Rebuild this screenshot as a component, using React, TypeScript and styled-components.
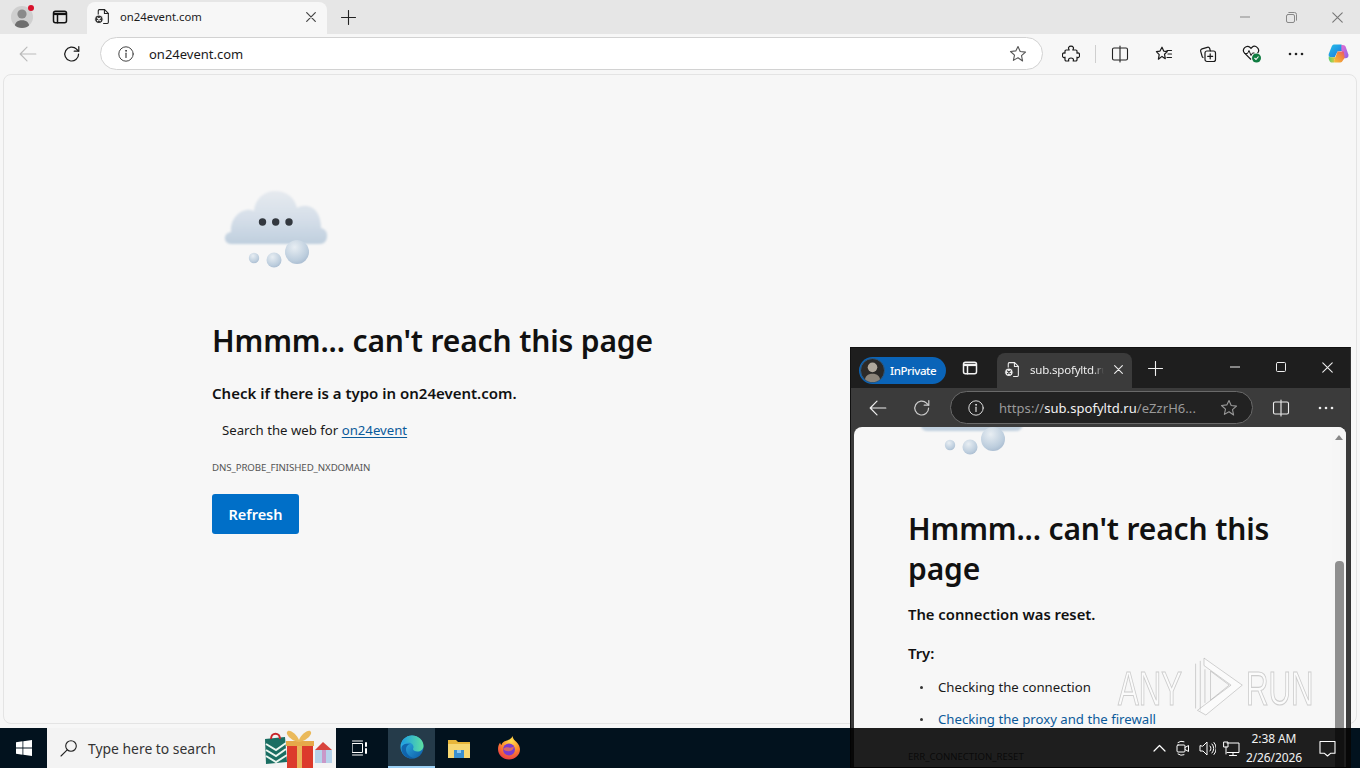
import React from "react";
import styled, { createGlobalStyle } from "styled-components";

const Global = createGlobalStyle`
  html, body { margin: 0; padding: 0; }
  body { font-family: "Noto Sans", "Open Sans", sans-serif; }
  * { box-sizing: border-box; }
`;

const Screen = styled.div`
  position: relative; width: 1360px; height: 768px; overflow: hidden;
  background: #1090f0; display: flex; flex-direction: column;
`;
const Browser = styled.div`
  height: 728px; background: #f7f7f7; display: flex; flex-direction: column; flex: none;
`;
const TabStrip = styled.div`
  height: 34px; background: #e6e6e6; display: flex; align-items: flex-end; flex: none; position: relative;
`;
const Profile = styled.div`
  position: relative; width: 22px; height: 22px; border-radius: 50%; background: #cfcfcf;
  margin: 0 0 6px 11px; flex: none; overflow: hidden;
`;
const ProfileWrap = styled.div` position: relative; flex: none; display: flex; `;
const RedDot = styled.span`
  position: absolute; left: 28px; top: -1px; width: 6px; height: 6px; border-radius: 50%; background: #d8112b;
`;
const TabIconSlot = styled.div<{ $w: number; $m?: number }>`
  width: ${p => p.$w}px; height: 28px; margin-left: ${p => p.$m ?? 0}px; flex: none;
  display: flex; align-items: center; justify-content: center; align-self: center;
`;
const ActiveTab = styled.div`
  width: 240px; height: 32px; margin-left: 13px; background: #f7f7f7; border-radius: 8px 8px 0 0;
  display: flex; align-items: center; padding: 0 11px 3px 7px; flex: none;
`;
const TabTitle = styled.span`
  font-size: 11.3px; color: #1c1c1c; margin-left: 9px; flex: 1; white-space: nowrap; overflow: hidden;
`;
const WindowControls = styled.div`
  margin-left: auto; display: flex; align-self: stretch; align-items: center;
`;
const WinBtn = styled.div`
  width: 46px; height: 34px; display: flex; align-items: center; justify-content: center;
`;
const Toolbar = styled.div`
  height: 39px; display: flex; align-items: center; flex: none; padding-left: 6px;
`;
const NavBtn = styled.div<{ $w?: number }>`
  width: ${p => p.$w ?? 44}px; height: 32px; display: flex; align-items: center; justify-content: center; flex: none;
`;
const AddressBar = styled.div`
  width: 943px; height: 33px; margin-left: 6px; background: #fff; border: 1px solid #d2d2d2; border-radius: 17px;
  display: flex; align-items: center; padding: 0 15px 0 17px; flex: none;
`;
const AddressText = styled.span`
  font-size: 13px; color: #1a1a1a; margin-left: 15px; flex: 1;
`;
const ToolIcons = styled.div`
  display: flex; align-items: center; margin-left: 6px;
`;
const ToolDivider = styled.div`
  width: 1px; height: 18px; background: #cfcfcf; margin: 0 2px 0 2px; flex: none;
`;
const Viewport = styled.div`
  flex: 1; margin: 1px 3px 4px 3px; border: 1px solid #e4e4e4; border-radius: 8px; background: #f7f7f7;
  padding: 106px 0 0 208px; overflow: hidden;
`;
const CloudBox = styled.div`
  width: 120px; height: 90px; margin-left: 6px;
`;
const Heading = styled.h1`
  margin: 50px 0 0; font-size: 30px; line-height: 40px; font-weight: 600; color: #111; letter-spacing: -.15px; white-space: nowrap;
`;
const SubHead = styled.p`
  margin: 21px 0 0; font-size: 15px; line-height: 22px; font-weight: 600; color: #111;
`;
const SearchLine = styled.p`
  margin: 16px 0 0 10px; font-size: 13.2px; line-height: 20px; color: #1a1a1a;
`;
const BlueLink = styled.a<{ $plain?: boolean }>`
  color: #0b5a9a; text-decoration: ${p => p.$plain ? "none" : "underline"}; text-underline-offset: 2px;
`;
const ErrorCode = styled.p`
  margin: 21px 0 0; font-size: 9.7px; line-height: 14px; color: #555; letter-spacing: -.1px;
`;
const RefreshBtn = styled.div`
  margin-top: 19px; width: 87px; height: 40px; border-radius: 3px; background: #006fc8; color: #fff;
  font-size: 14.5px; font-weight: 600; display: flex; align-items: center; justify-content: center;
`;

const Popup = styled.div`
  position: absolute; left: 850px; top: 347px; width: 501px; height: 421px; background: #1e1e1e;
  display: flex; flex-direction: column; border: 1px solid #111; border-right-color: #333; z-index: 2;
`;
const PopupStrip = styled.div`
  height: 40px; display: flex; align-items: flex-end; flex: none; background: #1e1e1e;
`;
const InPrivate = styled.div`
  width: 87px; height: 27px; margin: 0 0 4px 8px; border-radius: 14px; background: #0a64b8; color: #fff; flex: none;
  display: flex; align-items: center; font-size: 11.5px; font-weight: 500; gap: 5px; letter-spacing: -.4px;
`;
const Avatar = styled.div`
  width: 25px; height: 25px; border-radius: 50%; margin-left: 1px; overflow: hidden; flex: none;
  background: #2c2a28; border: 1px solid #2b5a84;
`;
const PopupTab = styled.div`
  width: 135px; height: 35px; margin-left: 13px; background: #3b3b3b; border-radius: 8px 8px 0 0; flex: none;
  display: flex; align-items: center; padding: 0 6px 2px 7px;
`;
const PopupTabTitle = styled.span`
  font-size: 11.5px; color: #eee; margin-left: 9px; width: 74px; overflow: hidden; white-space: nowrap;
  letter-spacing: -.2px; margin-right: 10px; flex: none;
  mask-image: linear-gradient(90deg, #000 85%, transparent);
`;
const PopupWinBtn = styled.div`
  width: 46px; height: 32px; display: flex; align-items: center; justify-content: center; flex: none;
`;
const PopupControls = styled.div`
  margin-left: auto; display: flex; align-self: flex-start; margin-top: 3px;
`;
const PopupToolbar = styled.div`
  height: 39px; background: #3b3b3b; display: flex; align-items: center; padding-left: 5px; flex: none;
`;
const PopupAddress = styled.div`
  width: 303px; height: 33px; margin-left: 6px; background: #222; border: 1px solid #6a6a6a; border-radius: 17px;
  display: flex; align-items: center; padding: 0 14px 0 17px; flex: none;
`;
const UrlText = styled.span`
  font-size: 13px; color: #9a9a9a; margin-left: 15px; flex: 1; white-space: nowrap; overflow: hidden; letter-spacing: .05px;
  b { color: #f2f2f2; font-weight: 400; }
`;
const PopupBody = styled.div`
  flex: 1; background: #3b3b3b; padding: 0 4px 0 3px; min-height: 0;
`;
const PopupPanel = styled.div`
  height: 100%; background: #f7f7f7; border-radius: 8px 8px 0 0; overflow: hidden; display: flex;
`;
const PopupContent = styled.div`
  flex: 1; padding-left: 54px; min-width: 0;
`;
const PopupCloud = styled.div`
  width: 120px; height: 90px; margin: -59px 0 0 6px;
`;
const PopupHeading = styled.h1`
  margin: 51px 0 0; width: 380px; font-size: 30px; line-height: 40px; font-weight: 600; color: #111; letter-spacing: -.15px;
`;
const PopupSub = styled.p`
  margin: 14px 0 0; font-size: 14.8px; line-height: 22px; font-weight: 600; color: #111;
`;
const TryLine = styled(PopupSub)` margin-top: 17px; `;
const TryList = styled.ul`
  margin: 13px 0 0; padding: 0 0 0 30px; font-size: 13.2px; color: #1a1a1a; list-style: none;
  li { line-height: 20px; margin-bottom: 12px; display: flex; }
  li::before { content: ""; flex: none; width: 3px; height: 3px; border-radius: 50%; background: #333; margin: 9px 15px 0 -18px; }
`;
const PopupCode = styled.p`
  margin: 21px 0 0; font-size: 9.6px; line-height: 14px; color: #555;
`;
const Scrollbar = styled.div`
  width: 14px; background: #f6f6f6; position: relative; flex: none; display: flex; flex-direction: column; align-items: center;
`;
const ScrollArrow = styled.div`
  width: 0; height: 0; margin-top: 8px; border-left: 4px solid transparent; border-right: 4px solid transparent; border-bottom: 5px solid #888;
`;
const ScrollThumb = styled.div`
  width: 9px; margin-top: 121px; flex: 1; background: #8f8f8f; border-radius: 4px 4px 0 0;
`;

const Taskbar = styled.div`
  position: relative; z-index: 3; height: 40px; flex: none; background: rgba(0,0,0,.88);
  display: flex; align-items: stretch;
`;
const StartBtn = styled.div`
  width: 47px; display: flex; align-items: center; justify-content: center; flex: none;
`;
const SearchBox = styled.div`
  width: 289px; background: #f3f3f3; display: flex; align-items: center; padding-left: 13px; position: relative; flex: none;
`;
const SearchText = styled.span`
  font-size: 13.9px; color: #333; margin-left: 10px;
`;
const Gifts = styled.div`
  position: absolute; right: 3px; top: 2px; width: 70px; height: 38px;
`;
const TaskApp = styled.div<{ $active?: boolean; $w?: number; $pr?: number }>`
  width: ${p => p.$w ?? 48}px; flex: none; display: flex; align-items: center; justify-content: center;
  padding-right: ${p => p.$pr ?? 0}px;
  ${p => p.$active ? "background:#253b4a; border-bottom:2px solid #9bd0f5;" : ""}
`;
const Tray = styled.div`
  margin-left: auto; display: flex; align-items: center; padding-right: 8px;
`;
const TrayIcon = styled.div`
  width: 24px; display: flex; align-items: center; justify-content: center; flex: none;
`;
const Clock = styled.div`
  width: 58px; margin-left: 2px; text-align: center; color: #f2f2f2; font-size: 12px; line-height: 19px; white-space: nowrap; letter-spacing: -.1px;
`;
const NotifyBtn = styled.div`
  width: 48px; margin-left: 1px; display: flex; align-items: center; justify-content: center; padding-right: 2px;
`;

const Watermark = styled.div`
  position: absolute; left: 1118px; top: 654px; z-index: 4; width: 200px; height: 66px; display: flex; align-items: center;
  pointer-events: none;
`;
const WatermarkWord = styled.span`
  font-family: "Liberation Sans", sans-serif; font-size: 48px; line-height: 1; color: rgba(255,255,255,.55);
  -webkit-text-stroke: 1.2px rgba(150,150,150,.45); transform: scaleX(.65); transform-origin: left center; width: 72px; display: block; margin-top: 4px;
`;

const Ic = ({ c = "#1a1a1a", s = 20, w = 1.2, vb = 20, children }: any) => (
  <svg width={s} height={s} viewBox={`0 0 ${vb} ${vb}`} fill="none" stroke={c} strokeWidth={w} strokeLinecap="round" strokeLinejoin="round">{children}</svg>
);
const TabsIcon = ({ c = "#111" }: any) => (
  <Ic c={c} s={16} vb={16} w={1.5}><rect x="1.5" y="2.2" width="13" height="11.6" rx="2" /><path d="M2 4.900h12" strokeWidth="2.400" strokeLinecap="butt" /><path d="M5.500 5.200v8.600" /></Ic>
);
const PageErr = ({ c = "#222", bg = "#f7f7f7", dot = "#333", dotx = "#fff" }: any) => (
  <Ic c={c} s={17} vb={16} w={1}>
    <path d="M4 6V2.5A1 1 0 0 1 5 1.5h5l3.5 3.5v8.5a1 1 0 0 1-1 1H9" />
    <path d="M9.8 1.5v3.7h3.7" />
    <circle cx="4.6" cy="10.6" r="4" fill={dot} stroke={bg} />
    <path d="M3.2 9.2l2.8 2.8M6 9.2l-2.8 2.8" stroke={dotx} strokeWidth="1" />
  </Ic>
);
const CloseX = ({ c = "#444", s = 10, w = 1.2 }: any) => (
  <Ic c={c} s={s} vb={10} w={w}><path d="M.7.7l8.6 8.6M9.3.7L.7 9.3" /></Ic>
);
const PlusI = ({ c = "#222" }: any) => (
  <Ic c={c} s={15} vb={15} w={1.1}><path d="M7.5.5v14M.5 7.5h14" /></Ic>
);
const InfoI = ({ c = "#444" }: any) => (
  <Ic c={c} s={16} vb={16} w={1}><circle cx="8" cy="8" r="7.2" /><path d="M8 7.2v4.2" strokeWidth="1.2" /><circle cx="8" cy="4.8" r=".5" fill={c} /></Ic>
);
const StarI = ({ c = "#555", s = 18 }: any) => (
  <Ic c={c} s={s} vb={18} w={1.1}><path d="M9 1.6l2.2 4.9 5.3.6-4 3.6 1.1 5.3L9 12.7l-4.6 2.7 1.1-5.3-4-3.6 5.3-.6z" /></Ic>
);
const RefreshI = ({ c = "#1a1a1a" }: any) => (
  <Ic c={c} s={18} vb={18} w={1.2}><path d="M15.6 9a6.9 6.9 0 1 1-2-4.8l2 1.9" /><path d="M15.8 1.6v4.6h-4.6" /></Ic>
);
const BackI = ({ c = "#bbb" }: any) => (
  <Ic c={c} s={18} vb={18} w={1.2}><path d="M1.2 9h15.6M8 2.2L1.2 9 8 15.8" /></Ic>
);
const SplitI = ({ c = "#222" }: any) => (
  <Ic c={c} s={18} vb={18} w={1.1}><path d="M8 3H3a1.5 1.5 0 0 0-1.5 1.5v9A1.5 1.5 0 0 0 3 15h5M10 3h5a1.5 1.5 0 0 1 1.5 1.5v9A1.5 1.5 0 0 1 15 15h-5M9 1v16" /></Ic>
);
const DotsI = ({ c = "#222" }: any) => (
  <svg width="16" height="4" viewBox="0 0 16 4"><circle cx="2" cy="2" r="1.3" fill={c} /><circle cx="8" cy="2" r="1.3" fill={c} /><circle cx="14" cy="2" r="1.3" fill={c} /></svg>
);
const PuzzleI = () => (
  <Ic s={18} vb={18} w={1.2}><path d="M7.200 5C5.600 2.600 7 1.200 9 1.200C11 1.200 12.400 2.600 10.800 5H13.800A1.200 1.200 0 0 1 15 6.200V8.200C16.800 7 17.600 8.800 17.600 10.200C17.600 11.600 16.800 13.400 15 12.200V14.800A1.200 1.200 0 0 1 13.800 16H11.200C12 13.800 10.500 13 9 13C7.500 13 6 13.800 6.800 16H4.200A1.200 1.200 0 0 1 3 14.800V12.200C1.200 13.400 .4 11.600 .4 10.200C.4 8.800 1.200 7 3 8.200V6.200A1.200 1.200 0 0 1 4.200 5Z" /></Ic>
);
const FavI = () => (
  <Ic s={18} vb={18} w={1.2}><path d="M7 2.2l1.7 3.9 3.6.5-2.8 2.6.8 4.5L7 11.4l-3.6 2.8.8-4.5L1.4 6.6 5 6.1zM12 5.5h4.5M13 9h3.5M12 12.5h4.5" /></Ic>
);
const CollI = () => (
  <Ic s={18} vb={18} w={1.2}><rect x="6" y="6" width="10.5" height="10.5" rx="2" /><path d="M11.2 8.8v5M8.7 11.3h5M4 12.5A2 2 0 0 1 3 11L1.7 6.3a2 2 0 0 1 1.4-2.5l5.2-1.5A2 2 0 0 1 10.7 3.5l.6 2.3" /></Ic>
);
const HeartI = () => (
  <svg width="20" height="20" viewBox="0 0 20 20" fill="none">
    <path d="M9 15.5L2.6 9.2A4 4 0 0 1 8.2 3.5l.8.8.8-.8a4 4 0 0 1 5.7 5.6" stroke="#1a1a1a" strokeWidth="1.2" />
    <path d="M2.5 9.5h3l1.5-3 2 5 1.5-2.5h2" stroke="#1a1a1a" strokeWidth="1" />
    <circle cx="14.5" cy="14" r="4.5" fill="#107c41" />
    <path d="M12.5 14l1.5 1.5 2.5-3" stroke="#fff" strokeWidth="1.1" />
  </svg>
);
const CopilotI = () => (
  <svg width="23" height="23" viewBox="0 0 24 24">
    <defs>
      <linearGradient id="cpa" x1="0" y1="0" x2="1" y2="1"><stop offset="0" stopColor="#27c2e8" /><stop offset="1" stopColor="#1a6fe0" /></linearGradient>
      <linearGradient id="cpb" x1="0" y1="0" x2="1" y2="1"><stop offset="0" stopColor="#e86fd0" /><stop offset="1" stopColor="#8a63e8" /></linearGradient>
      <linearGradient id="cpc" x1="0" y1="1" x2="1" y2="0"><stop offset="0" stopColor="#f6c23a" /><stop offset=".6" stopColor="#f08a3c" /><stop offset="1" stopColor="#e8507a" /></linearGradient>
      <linearGradient id="cpd" x1="0" y1="0" x2="1" y2="0"><stop offset="0" stopColor="#5fd06c" /><stop offset="1" stopColor="#e8c83a" /></linearGradient>
    </defs>
    <path d="M8 2.5h6.5c1.2 0 1.8.8 1.9 1.5l1.2 5-6.6 1-3 6H4.2C2.5 16 1.2 14.5 1.8 12.5L5 4.5C5.5 3.2 6.5 2.5 8 2.5z" fill="url(#cpa)" />
    <path d="M15 3h1.5c1.6 0 2.6.9 3 2l2.8 8c.6 2-.8 4-3 4H17l-2-9z" fill="url(#cpb)" />
    <path d="M2 14.5c.6 1 1.4 1.5 2.5 1.5H9L7.5 19c-.5 1-.2 2.5 1.5 2.5H5.5C3 21.5 1 18 2 14.5z" fill="url(#cpd)" />
    <path d="M11 10h6.5l1 6.5-2.5 3.5c-.7 1-1.7 1.5-3 1.5H9c-1.5 0-2-1.3-1.5-2.5z" fill="url(#cpc)" />
  </svg>
);
const MinI = ({ c = "#888" }: any) => <Ic c={c} s={10} vb={10} w={1}><path d="M0 5h10" /></Ic>;
const RestoreI = () => (
  <Ic c="#888" s={11} vb={11} w={1}><rect x=".5" y="2.5" width="8" height="8" rx="1.5" /><path d="M2.8 .5h5.7a2 2 0 0 1 2 2v5.7" /></Ic>
);
const MaxI = () => <Ic c="#eee" s={10} vb={10} w={1}><rect x=".5" y=".5" width="9" height="9" rx="1" /></Ic>;

const Person = ({ a = "#8a8a8a", b = "#6e6e6e" }: any) => (
  <svg width="100%" height="100%" viewBox="0 0 22 22">
    <circle cx="11" cy="8" r="4.6" fill={a} />
    <path d="M3.5 22c0-5.5 3-7.800 7.500-7.800s7.500 2.300 7.500 7.800z" fill={b} />
  </svg>
);

let uid = 0;
const Cloud = () => {
  const id = React.useMemo(() => `cl${uid++}`, []);
  return (
    <svg width="120" height="90" viewBox="218 181 120 90">
      <defs>
        <linearGradient id={`${id}b`} x1="0" y1="0" x2="0" y2="1">
          <stop offset="0" stopColor="#e6eaef" />
          <stop offset=".5" stopColor="#d6dfe9" />
          <stop offset="1" stopColor="#bfcfde" />
        </linearGradient>
        <radialGradient id={`${id}s`} cx=".4" cy=".3" r=".8">
          <stop offset="0" stopColor="#e8eef3" />
          <stop offset=".7" stopColor="#bccddd" />
          <stop offset="1" stopColor="#a3b6cc" />
        </radialGradient>
        <filter id={`${id}f`}><feGaussianBlur stdDeviation=".8" /></filter>
      </defs>
      <g filter={`url(#${id}f)`}>
        <path fill={`url(#${id}b)`} d="M231 244C226 244 224.500 240 225 237C225.500 234 228 232.500 231 232C230 222 236 212 246 210C249 209.500 252 210 254 211C255 199 264 191 275 191C287 191 295 198 297 208C300 206 304 205.500 307 206C316 207 321 216 321 228C325 229 327.500 232 327 236C327 241 324 244 320 244Z" />
      </g>
      <circle cx="262.500" cy="222" r="3.700" fill="#33383f" />
      <circle cx="275.700" cy="222" r="3.700" fill="#33383f" />
      <circle cx="289" cy="222" r="3.700" fill="#33383f" />
      <circle cx="297" cy="252" r="12" fill={`url(#${id}s)`} />
      <circle cx="274" cy="260" r="7.500" fill={`url(#${id}s)`} />
      <circle cx="254" cy="258" r="5.200" fill={`url(#${id}s)`} />
    </svg>
  );
};

const GiftArt = () => (
  <svg width="70" height="38" viewBox="0 0 70 38">
    <path d="M2 9l20-2 2 25-21 2z" fill="#1a6e62" />
    <path d="M3 14l10 6 10-7M3 20l10 6 10-7M3 26l10 6 11-7" stroke="#eaf6ef" strokeWidth="2" fill="none" />
    <path d="M8 9c0-7 9-7 9 0" stroke="#c8262b" strokeWidth="2" fill="none" />
    <rect x="24" y="13" width="26" height="25" fill="#dc3a2c" />
    <rect x="34" y="13" width="5" height="25" fill="#eab45a" />
    <rect x="23" y="11" width="28" height="5" fill="#e6a94a" />
    <path d="M36 12C28 11 21 3 25 1c3-1 9 4 11 9 2-5 8-10 11-9 4 2-3 10-11 11z" fill="#eab95a" />
    <rect x="52" y="20" width="17" height="13" fill="#b6d2ea" />
    <rect x="59" y="20" width="4" height="13" fill="#c998c8" />
    <path d="M52 20l8-8 9 8z" fill="#d8433c" />
  </svg>
);

const WinLogo = () => (
  <svg width="16" height="16" viewBox="0 0 16 16" fill="#fff">
    <path d="M0 2.200L6.500 1.300V7.600H0zM7.300 1.200L16 0V7.600H7.300zM0 8.400H6.500V14.700L0 13.800zM7.300 8.400H16V16L7.300 14.800z" />
  </svg>
);
const SearchI = () => (
  <Ic c="#222" s={18} vb={18} w={1.1}><circle cx="11" cy="7" r="5.300" /><path d="M7.200 10.800L1 17" /></Ic>
);
const TaskViewI = () => (
  <Ic c="#fff" s={16} vb={16} w={1}><rect x=".5" y="3.500" width="10" height="9" /><path d="M.5 1h10M.5 15h10" /><path d="M14 3v3M14 9v4" strokeWidth="2" /></Ic>
);
const EdgeI = () => (
  <svg width="24" height="24" viewBox="0 0 24 24">
    <defs>
      <linearGradient id="ega" x1="0" y1="0" x2="1" y2="1"><stop offset="0" stopColor="#35c1f1" /><stop offset="1" stopColor="#0c59a4" /></linearGradient>
      <linearGradient id="egb" x1="0" y1="0" x2="1" y2="0"><stop offset="0" stopColor="#1b9de2" /><stop offset="1" stopColor="#5ee0a0" /></linearGradient>
    </defs>
    <circle cx="12" cy="12" r="11.500" fill="url(#ega)" />
    <path d="M1.500 9C3 3.500 7.500.5 12 .5c6 0 11.500 4.500 11.500 10.500 0 3.500-3 5.500-6 5.500-2.500 0-4.500-1-4.500-2.500 0-.6.500-.8.500-2 0-2-2-4.500-5-4.500-3.500 0-5.500 1.200-7 1.500z" fill="url(#egb)" />
    <path d="M11 9c-2.500 0-5 2-5 5.500 0 4 3.500 8 8.500 8.500-6 2-13-2.500-13-9.500C1.500 9 6 8 11 9z" fill="#0c59a4" opacity=".8" />
  </svg>
);
const FolderI = () => (
  <svg width="22" height="20" viewBox="0 0 22 20">
    <path d="M0 2h8l2 2h12v15H0z" fill="#e8b63a" />
    <rect x="0" y="6" width="22" height="14" fill="#f7d772" />
    <rect x="6" y="12" width="10" height="8" fill="#3a8fd0" />
    <rect x="9" y="12" width="4" height="3" fill="#8fc8ee" />
  </svg>
);
const FirefoxI = () => (
  <svg width="24" height="24" viewBox="0 0 24 24">
    <defs>
      <radialGradient id="ffa" cx=".6" cy=".2" r=".9"><stop offset="0" stopColor="#ffe14d" /><stop offset=".5" stopColor="#ff8a2b" /><stop offset="1" stopColor="#e62a4c" /></radialGradient>
    </defs>
    <path d="M15.500 0c.5 3 2 4 4 6 2.500 2.500 3.500 5 3.500 7.500C23 19 18 23.500 12 23.500S1 19 1 13c0-3 1-5 2.200-6.500 0 1 .5 2 1.300 2.500.5-2 2-3.500 4-4 2.500-.8 6-2 7-5z" fill="url(#ffa)" />
    <circle cx="12" cy="13.500" r="6" fill="#7b3ccf" />
    <path d="M6 13c2-2 4-2 6-1.500s3 0 5-1c-.5 2.500-1.500 4-4 4.500-2.500.5-5 0-7-2z" fill="#ff7a3a" opacity=".7" />
  </svg>
);
const MeetI = () => (
  <Ic c="#fff" s={16} vb={16} w={1}><rect x="2" y="5" width="8" height="7" rx="1" /><path d="M10 7.500l3.500-2v6L10 9.500" /><path d="M3 2.500a6 6 0 0 1 6-.8M3 14a6 6 0 0 0 6 .8" /></Ic>
);
const VolumeI = () => (
  <Ic c="#fff" s={17} vb={17} w={1}><path d="M1 6v5h3l4 4V2L4 6zM11 6a3.500 3.500 0 0 1 0 5M13 4a6.500 6.500 0 0 1 0 9M15 2.500a9 9 0 0 1 0 12" /></Ic>
);
const NetworkI = () => (
  <Ic c="#fff" s={17} vb={17} w={1}><path d="M4 3h12v9.500H4M10 12.500V15M6.500 15.500h7" /><rect x="1" y="2" width="4" height="5" /><path d="M3 7v7" /></Ic>
);
const ChevronI = () => <Ic c="#fff" s={13} vb={13} w={1.2}><path d="M1 9l5.500-5.500L12 9" /></Ic>;
const ChatI = () => (
  <Ic c="#fff" s={17} vb={17} w={1.1}><path d="M1 1.500h15v11.800h-4.500L8.500 16l-3-2.700H1z" /></Ic>
);
const PlayMark = () => (
  <svg width="56" height="66" viewBox="0 0 60 66" fill="rgba(255,255,255,.5)" stroke="rgba(150,150,150,.45)" strokeWidth="1">
    <path d="M6 8v48M11 5v54M16 14v36" />
    <path d="M15 2L56 31 17 63 8 58 44 31 15 10z" />
    <path d="M22 16l20 15-20 16z" fill="none" />
  </svg>
);

export default function App() {
  return (
    <Screen>
      <Global />
      <Browser>
        <TabStrip>
          <ProfileWrap>
            <Profile><Person /></Profile>
            <RedDot />
          </ProfileWrap>
          <TabIconSlot $w={28} $m={13}><TabsIcon /></TabIconSlot>
          <ActiveTab>
            <PageErr />
            <TabTitle>on24event.com</TabTitle>
            <CloseX />
          </ActiveTab>
          <TabIconSlot $w={28} $m={7}><PlusI /></TabIconSlot>
          <WindowControls>
            <WinBtn><MinI /></WinBtn>
            <WinBtn><RestoreI /></WinBtn>
            <WinBtn><CloseX c="#777" s={11} w={1} /></WinBtn>
          </WindowControls>
        </TabStrip>
        <Toolbar>
          <NavBtn><BackI /></NavBtn>
          <NavBtn><RefreshI /></NavBtn>
          <AddressBar>
            <InfoI />
            <AddressText>on24event.com</AddressText>
            <StarI />
          </AddressBar>
          <ToolIcons>
            <NavBtn><PuzzleI /></NavBtn>
            <ToolDivider />
            <NavBtn><SplitI /></NavBtn>
            <NavBtn><FavI /></NavBtn>
            <NavBtn><CollI /></NavBtn>
            <NavBtn><HeartI /></NavBtn>
            <NavBtn><DotsI /></NavBtn>
            <NavBtn $w={41}><CopilotI /></NavBtn>
          </ToolIcons>
        </Toolbar>
        <Viewport>
          <CloudBox><Cloud /></CloudBox>
          <Heading>Hmmm... can't reach this page</Heading>
          <SubHead>Check if there is a typo in on24event.com.</SubHead>
          <SearchLine>Search the web for <BlueLink>on24event</BlueLink></SearchLine>
          <ErrorCode>DNS_PROBE_FINISHED_NXDOMAIN</ErrorCode>
          <RefreshBtn>Refresh</RefreshBtn>
        </Viewport>
      </Browser>

      <Popup>
        <PopupStrip>
          <InPrivate><Avatar><Person a="#b0a89c" b="#8d857a" /></Avatar>InPrivate</InPrivate>
          <TabIconSlot $w={28} $m={10}><TabsIcon c="#f2f2f2" /></TabIconSlot>
          <PopupTab>
            <PageErr c="#eee" bg="#3b3b3b" dot="#eee" dotx="#333" />
            <PopupTabTitle>sub.spofyltd.ru</PopupTabTitle>
            <CloseX c="#eee" s={9} />
          </PopupTab>
          <TabIconSlot $w={28} $m={9}><PlusI c="#f2f2f2" /></TabIconSlot>
          <PopupControls>
            <PopupWinBtn><MinI c="#eee" /></PopupWinBtn>
            <PopupWinBtn><MaxI /></PopupWinBtn>
            <PopupWinBtn><CloseX c="#eee" s={11} w={1} /></PopupWinBtn>
          </PopupControls>
        </PopupStrip>
        <PopupToolbar>
          <NavBtn $w={44}><BackI c="#eee" /></NavBtn>
          <NavBtn><RefreshI c="#ccc" /></NavBtn>
          <PopupAddress>
            <InfoI c="#ddd" />
            <UrlText>https://<b>sub.spofyltd.ru</b>/eZzrH6...</UrlText>
            <StarI c="#999" />
          </PopupAddress>
          <NavBtn $w={56}><SplitI c="#eee" /></NavBtn>
          <NavBtn $w={34}><DotsI c="#eee" /></NavBtn>
        </PopupToolbar>
        <PopupBody>
          <PopupPanel>
            <PopupContent>
              <PopupCloud><Cloud /></PopupCloud>
              <PopupHeading>Hmmm... can't reach this page</PopupHeading>
              <PopupSub>The connection was reset.</PopupSub>
              <TryLine>Try:</TryLine>
              <TryList>
                <li>Checking the connection</li>
                <li><BlueLink $plain>Checking the proxy and the firewall</BlueLink></li>
              </TryList>
              <PopupCode>ERR_CONNECTION_RESET</PopupCode>
            </PopupContent>
            <Scrollbar><ScrollArrow /><ScrollThumb /></Scrollbar>
          </PopupPanel>
        </PopupBody>
      </Popup>

      <Watermark>
        <WatermarkWord>ANY</WatermarkWord>
        <PlayMark />
        <WatermarkWord>RUN</WatermarkWord>
      </Watermark>

      <Taskbar>
        <StartBtn><WinLogo /></StartBtn>
        <SearchBox>
          <SearchI />
          <SearchText>Type here to search</SearchText>
          <Gifts><GiftArt /></Gifts>
        </SearchBox>
        <TaskApp $w={52} $pr={4}><TaskViewI /></TaskApp>
        <TaskApp $active $w={47}><EdgeI /></TaskApp>
        <TaskApp $w={48}><FolderI /></TaskApp>
        <TaskApp $w={52}><FirefoxI /></TaskApp>
        <Tray>
          <TrayIcon><ChevronI /></TrayIcon>
          <TrayIcon><MeetI /></TrayIcon>
          <TrayIcon><VolumeI /></TrayIcon>
          <TrayIcon><NetworkI /></TrayIcon>
          <Clock>2:38 AM<br />2/26/2026</Clock>
          <NotifyBtn><ChatI /></NotifyBtn>
        </Tray>
      </Taskbar>
    </Screen>
  );
}
